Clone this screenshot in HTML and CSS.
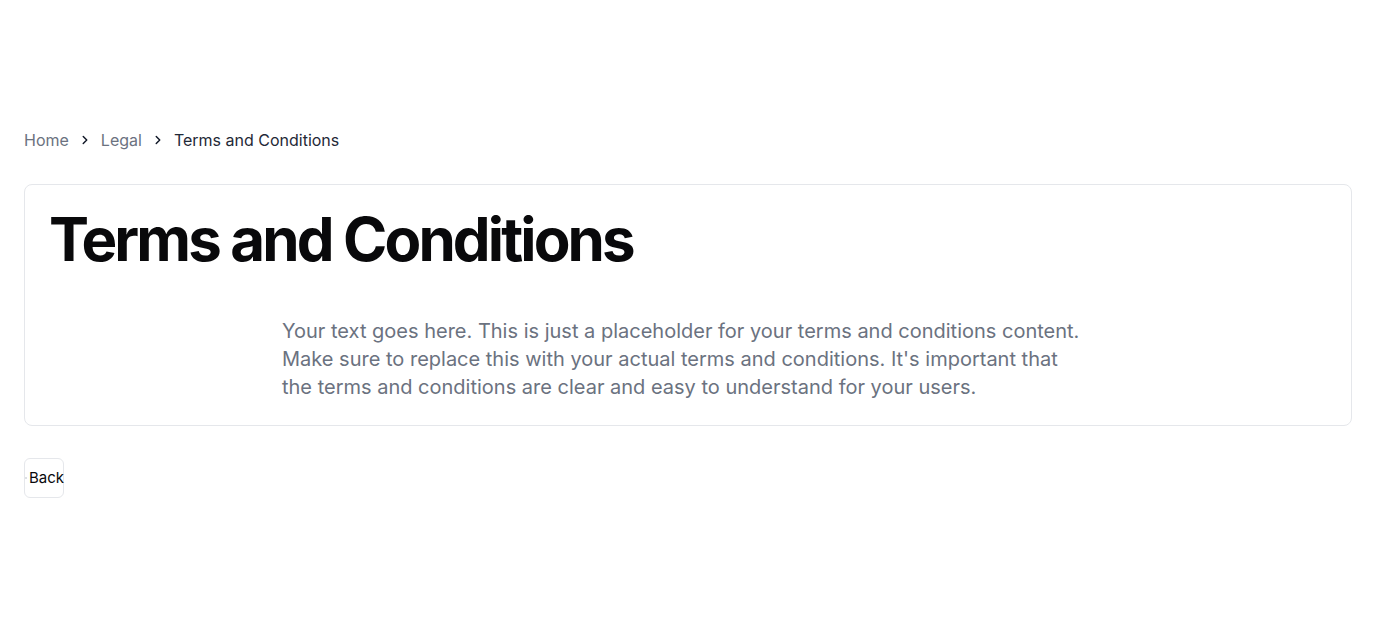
FILE: index.html
```html
<!DOCTYPE html>
<html lang="en">
<head>
<meta charset="utf-8">
<title>Terms and Conditions</title>
<link rel="stylesheet" href="styles.css">
</head>
<body>
<main class="page">
  <nav class="crumbs" aria-label="Breadcrumb">
    <ol class="crumb-list">
      <li class="crumb"><a href="#" class="crumb-link">Home</a></li>
      <li class="sep"><svg viewBox="0 0 24 24" width="14" height="14" fill="none" stroke="currentColor" stroke-width="2.5" stroke-linecap="round" stroke-linejoin="round"><path d="m9 18 6-6-6-6"/></svg></li>
      <li class="crumb"><a href="#" class="crumb-link">Legal</a></li>
      <li class="sep"><svg viewBox="0 0 24 24" width="14" height="14" fill="none" stroke="currentColor" stroke-width="2.5" stroke-linecap="round" stroke-linejoin="round"><path d="m9 18 6-6-6-6"/></svg></li>
      <li class="crumb current">Terms and Conditions</li>
    </ol>
  </nav>
  <section class="card">
    <h1 class="title">Terms and Conditions</h1>
    <div class="prose">
      <p>Your text goes here. This is just a placeholder for your terms and conditions content. Make sure to replace this with your actual terms and conditions. It's important that the terms and conditions are clear and easy to understand for your users.</p>
    </div>
  </section>
  <div class="actions">
    <button class="back-btn" type="button"><svg class="back-icon" viewBox="0 0 24 24" width="4" height="4" fill="none" stroke="currentColor" stroke-width="4"><path d="m15 18-6-6 6-6"/></svg>Back</button>
  </div>
</main>
</body>
</html>
```
FILE: styles.css
```css
* { box-sizing: border-box; }
html, body { margin: 0; padding: 0; background: #fff; }
body { font-family: Inter, "Noto Sans", sans-serif; color: #09090b; }
.page { padding: 128px 24px 24px; }
.crumbs { margin-bottom: 32px; }
.crumb-list { list-style: none; margin: 0; padding: 0; display: flex; align-items: center; gap: 9px; font-size: 16px; line-height: 24px; color: #6b7280; }
.crumb-link { color: #6b7280; text-decoration: none; }
.crumb.current { color: #1f2937; }
.sep { display: flex; align-items: center; color: #111827; }
.card { border: 1px solid #e5e7eb; border-radius: 8px; padding: 24px; }
.title { margin: 0; font-size: 60px; line-height: 60px; font-weight: 700; letter-spacing: -0.048em; color: #09090b; }
.prose { max-width: 812px; padding-right: 10px; margin: 48px auto 0; font-size: 20px; line-height: 28px; color: #6b7280; }
.prose p { margin: 0; }
.actions { margin-top: 32px; }
.back-btn { width: 40px; height: 40px; padding: 0 0 1px; border: 1px solid #e5e7eb; border-radius: 6px; background: #fff; display: flex; align-items: center; justify-content: center; font-family: Inter, sans-serif; font-size: 15px; color: #09090b; overflow: visible; white-space: nowrap; }
.back-icon { flex: none; margin-right: 1px; color: #9ca3af; }
```
